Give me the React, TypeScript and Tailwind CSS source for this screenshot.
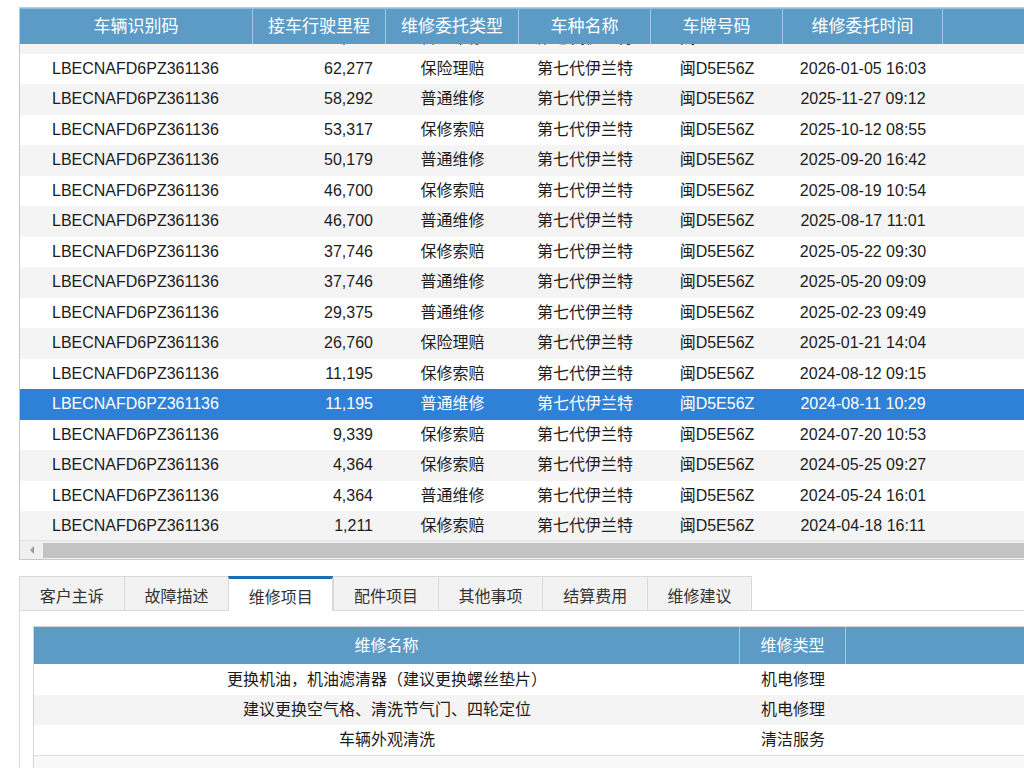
import React from 'react';

const font = { fontFamily: '"Liberation Sans", "Noto Sans CJK SC", sans-serif' };

const columns = [
  { title: '车辆识别码', w: 'w-[233px]' },
  { title: '接车行驶里程', w: 'w-[133px]' },
  { title: '维修委托类型', w: 'w-[133px]' },
  { title: '车种名称', w: 'w-[132px]' },
  { title: '车牌号码', w: 'w-[132px]' },
  { title: '维修委托时间', w: 'w-[160px]' },
  { title: '', w: 'w-[140px]' },
];

const records = [
  ['64,105', '普通维修', '2026-02-11 10:20'],
  ['62,277', '保险理赔', '2026-01-05 16:03'],
  ['58,292', '普通维修', '2025-11-27 09:12'],
  ['53,317', '保修索赔', '2025-10-12 08:55'],
  ['50,179', '普通维修', '2025-09-20 16:42'],
  ['46,700', '保修索赔', '2025-08-19 10:54'],
  ['46,700', '普通维修', '2025-08-17 11:01'],
  ['37,746', '保修索赔', '2025-05-22 09:30'],
  ['37,746', '普通维修', '2025-05-20 09:09'],
  ['29,375', '普通维修', '2025-02-23 09:49'],
  ['26,760', '保险理赔', '2025-01-21 14:04'],
  ['11,195', '保修索赔', '2024-08-12 09:15'],
  ['11,195', '普通维修', '2024-08-11 10:29'],
  ['9,339', '保修索赔', '2024-07-20 10:53'],
  ['4,364', '保修索赔', '2024-05-25 09:27'],
  ['4,364', '普通维修', '2024-05-24 16:01'],
  ['1,211', '保修索赔', '2024-04-18 16:11'],
];

const tabs = ['客户主诉', '故障描述', '维修项目', '配件项目', '其他事项', '结算费用', '维修建议'];

const repairs = [
  ['更换机油，机油滤清器（建议更换螺丝垫片）', '机电修理'],
  ['建议更换空气格、清洗节气门、四轮定位', '机电修理'],
  ['车辆外观清洗', '清洁服务'],
];

export default function App() {
  const selected = 12;

  return (
    <div className="w-[1024px] h-[768px] overflow-hidden bg-white text-[#1c1c1c]" style={font}>
      <div className="pl-[19px] pt-[7px] w-[1200px]">
        {/* vehicle history grid */}
        <div className="border border-[#c8c8c8] w-[1100px]">
          <div className="flex h-[36px] bg-[#5b9bc6] border-t border-[#8fbbdc]">
            {columns.map((c, i) => (
              <div
                key={i}
                className={`${c.w} shrink-0 flex items-center justify-center text-white text-[17px] border-r border-[#a4c8e2]`}
              >
                {c.title}
              </div>
            ))}
          </div>
          <div className="h-[496px] overflow-hidden">
            <div className="-mt-[21px]">
              {records.map((r, i) => {
                const isSel = i === selected;
                const bg = isSel ? 'bg-[#2f80d7] text-white' : i % 2 === 0 ? 'bg-[#f4f4f4]' : 'bg-white';
                return (
                  <div key={i} className={`flex h-[30.5px] items-center text-[16px] ${bg}`}>
                    <div className="w-[233px] shrink-0 pl-[32px]">LBECNAFD6PZ361136</div>
                    <div className="w-[133px] shrink-0 text-right pr-[13px]">{r[0]}</div>
                    <div className="w-[133px] shrink-0 text-center">{r[1]}</div>
                    <div className="w-[132px] shrink-0 text-center">第七代伊兰特</div>
                    <div className="w-[132px] shrink-0 text-center">闽D5E56Z</div>
                    <div className="w-[160px] shrink-0 text-center">{r[2]}</div>
                    <div className="w-[140px] shrink-0" />
                  </div>
                );
              })}
            </div>
          </div>
          {/* horizontal scrollbar */}
          <div className="flex items-center h-[19px] bg-[#f0f0f0] border-t border-[#e2e2e2]">
            <div className="w-[23px] flex items-center justify-center">
              <svg width="6" height="8" viewBox="0 0 6 8">
                <path d="M5 0 L1 4 L5 8 Z" fill="#9a9a9a" />
              </svg>
            </div>
            <div className="flex-1 h-[15px] bg-[#c3c3c3]" />
          </div>
        </div>

        {/* detail tabs */}
        <div className="mt-[16px] flex items-end h-[35px] border-b border-[#d9d9d9] w-[1100px]">
          {tabs.map((t, i) =>
            i === 2 ? (
              <div
                key={t}
                className="w-[104.7px] h-[35px] -mb-px pt-[5px] flex items-center justify-center text-[16px] text-[#333] bg-white border-t-[3px] border-t-[#1c6fb5] border-x border-x-[#d9d9d9]"
              >
                {t}
              </div>
            ) : (
              <div
                key={t}
                className="w-[104.7px] h-[34px] pt-[7px] flex items-center justify-center text-[16px] text-[#333] bg-[#f2f2f2] border-t border-l border-[#d9d9d9] last:border-r"
              >
                {t}
              </div>
            )
          )}
        </div>

        <div className="border-l border-[#d9d9d9] pl-[13px] pt-[15px] h-[200px]">
          <div className="border-l border-t border-[#d4d4d4] w-[1100px]">
            <div className="flex h-[37px] bg-[#5b9bc6] text-white text-[16px]">
              <div className="w-[706px] shrink-0 flex items-center justify-center border-r border-[#a4c8e2]">维修名称</div>
              <div className="w-[106px] shrink-0 flex items-center justify-center border-r border-[#a4c8e2]">维修类型</div>
              <div className="flex-1" />
            </div>
            <div className="pt-[1px]">
              {repairs.map((r, i) => (
                <div key={i} className={`flex h-[30px] items-center text-[16px] ${i % 2 === 1 ? 'bg-[#f4f4f4]' : 'bg-white'}`}>
                  <div className="w-[706px] shrink-0 text-center">{r[0]}</div>
                  <div className="w-[106px] shrink-0 text-center">{r[1]}</div>
                </div>
              ))}
            </div>
            <div className="h-[30px] bg-[#f8f8f8] border-t border-[#dcdcdc]" />
          </div>
        </div>
      </div>
    </div>
  );
}
